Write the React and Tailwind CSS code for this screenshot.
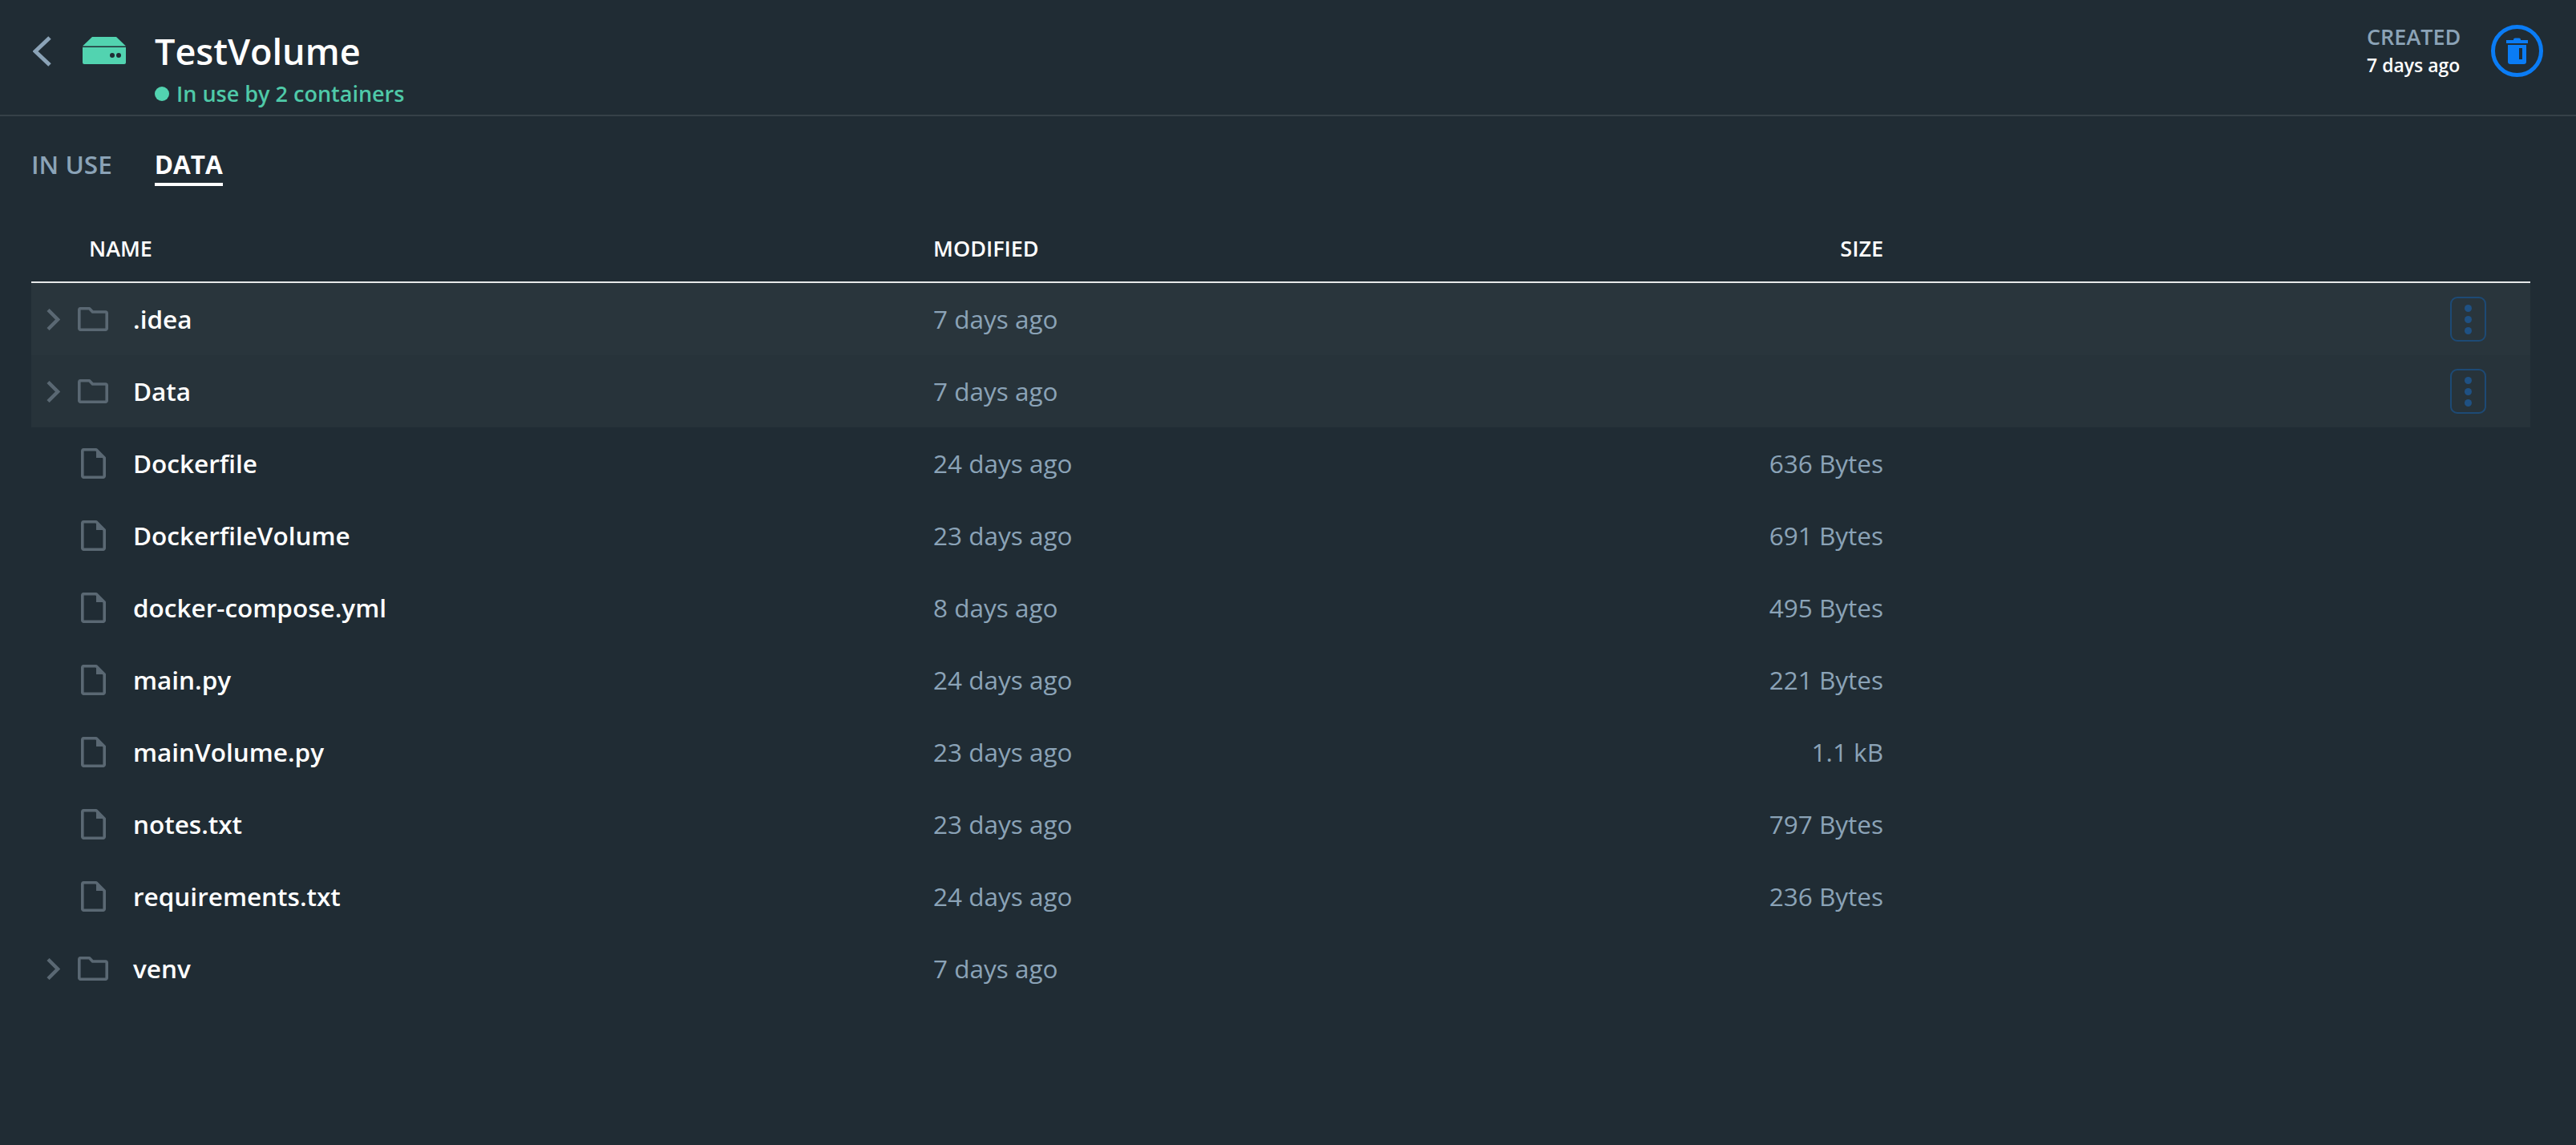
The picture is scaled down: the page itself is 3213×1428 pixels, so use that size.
import React from 'react';

const rows = [
  { name: '.idea', modified: '7 days ago', folder: true, menu: true, bg: 'bg-[#29353c]' },
  { name: 'Data', modified: '7 days ago', folder: true, menu: true, bg: 'bg-[#27333a]' },
  { name: 'Dockerfile', modified: '24 days ago', size: '636 Bytes' },
  { name: 'DockerfileVolume', modified: '23 days ago', size: '691 Bytes' },
  { name: 'docker-compose.yml', modified: '8 days ago', size: '495 Bytes' },
  { name: 'main.py', modified: '24 days ago', size: '221 Bytes' },
  { name: 'mainVolume.py', modified: '23 days ago', size: '1.1 kB' },
  { name: 'notes.txt', modified: '23 days ago', size: '797 Bytes' },
  { name: 'requirements.txt', modified: '24 days ago', size: '236 Bytes' },
  { name: 'venv', modified: '7 days ago', folder: true },
];

const VolumeIcon = () => (
  <svg width="54" height="34" viewBox="0 0 54 34" className="shrink-0">
    <path d="M12 0h30l12 11.500H0z" fill="#52d3b0" />
    <path d="M0 13h54v19a2 2 0 0 1-2 2H2a2 2 0 0 1-2-2z" fill="#52d3b0" />
    <circle cx="37" cy="23" r="3" fill="#202c34" />
    <circle cx="45" cy="23" r="3" fill="#202c34" />
  </svg>
);

const BackIcon = () => (
  <svg width="23" height="38" viewBox="0 0 23 38" fill="none">
    <path d="M21 2L3 19l18 17" stroke="#8ba3b7" strokeWidth="5" />
  </svg>
);

const Chevron = () => (
  <svg width="17" height="27" viewBox="0 0 17 27" fill="none">
    <path d="M2 1.500l12 12-12 12" stroke="#5a6873" strokeWidth="4.500" />
  </svg>
);

const FolderIcon = () => (
  <svg width="38" height="30" viewBox="0 0 38 30" fill="none">
    <path d="M1.800 3A1.500 1.500 0 0 1 3 1.800h11.500l4 4.200H35A1.500 1.500 0 0 1 36.200 7.500V27a1.500 1.500 0 0 1-1.200 1.200H3A1.500 1.500 0 0 1 1.800 27z" stroke="#5a6873" strokeWidth="3.600" strokeLinejoin="round" />
  </svg>
);

const FileIcon = () => (
  <svg width="31" height="38" viewBox="0 0 31 38" fill="none">
    <path d="M1.800 3A1.500 1.500 0 0 1 3 1.800h16L29.200 12v23a1.500 1.500 0 0 1-1.200 1.200H3A1.500 1.500 0 0 1 1.800 35z" stroke="#5a6873" strokeWidth="3.600" strokeLinejoin="round" />
    <path d="M19 1.500V12h10.500z" fill="#5a6873" />
  </svg>
);

const TrashIcon = () => (
  <svg width="27" height="33" viewBox="0 0 27 33">
    <path d="M9 2.500a2 2 0 0 1 2-2h5a2 2 0 0 1 2 2V3h9v4H0V3h9z" fill="#0a7cf5" />
    <path d="M2 9h23v21a3 3 0 0 1-3 3H5a3 3 0 0 1-3-3z" fill="#0a7cf5" />
    <rect x="16" y="13" width="4" height="14" fill="#202c34" />
  </svg>
);

const Kebab = () => (
  <div className="w-[45px] h-[56px] rounded-[9px] border-[2px] border-[#1d4a75] flex flex-col items-center justify-center gap-[5px]">
    <span className="w-[9px] h-[9px] rounded-full bg-[#1f5183]" />
    <span className="w-[9px] h-[9px] rounded-full bg-[#1f5183]" />
    <span className="w-[9px] h-[9px] rounded-full bg-[#1f5183]" />
  </div>
);

function Row({ row }) {
  return (
    <div className={`h-[90px] flex items-center ${row.bg || ''}`}>
      <div className="w-[58px] shrink-0 pl-[19px] flex items-center">
        {row.folder && <Chevron />}
      </div>
      <div className="w-[69px] shrink-0">
        <div className="w-[38px] flex justify-center">{row.folder ? <FolderIcon /> : <FileIcon />}</div>
      </div>
      <div className="w-[998px] shrink-0 text-[31.5px] font-semibold text-white">{row.name}</div>
      <div className="w-[600px] shrink-0 text-[31.5px] text-[#8ba3b7]">{row.modified}</div>
      <div className="w-[585px] shrink-0 text-right text-[31.5px] text-[#8ba3b7]">{row.size}</div>
      <div className="flex-1 flex justify-end pr-[55px]">{row.menu && <Kebab />}</div>
    </div>
  );
}

export default function App() {
  return (
    <div className="min-h-[1428px] bg-[#202c34] font-['Open_Sans',sans-serif] overflow-hidden">
      <header className="h-[145px] border-b-[2px] border-[#364148] flex pl-[41px] pr-[41px]">
        <div className="pt-[45px] w-[62px] shrink-0"><BackIcon /></div>
        <div className="pt-[46px] w-[90px] shrink-0"><VolumeIcon /></div>
        <div className="flex-1 pt-[34px]">
          <div className="text-[45px] leading-[60px] font-semibold text-white">TestVolume</div>
          <div className="flex items-center gap-[9px] text-[27px] leading-[36px] font-semibold text-[#4fc9a8] mt-[5px]">
            <span className="w-[18px] h-[18px] rounded-full bg-[#52d3b0]" />
            In use by 2 containers
          </div>
        </div>
        <div className="pt-[28px] w-[155px] shrink-0">
          <div className="text-[27px] leading-[36px] font-semibold text-[#8ba3b7]">CREATED</div>
          <div className="text-[23px] leading-[34px] font-semibold text-white">7 days ago</div>
        </div>
        <div className="pt-[31px] shrink-0">
          <div className="w-[65px] h-[65px] rounded-full border-[5px] border-[#0a7cf5] flex items-center justify-center">
            <TrashIcon />
          </div>
        </div>
      </header>

      <nav className="flex gap-[53px] pl-[39px] pt-[39px] text-[31.5px] leading-[42px] font-semibold">
        <div className="text-[#8ba3b7]">IN USE</div>
        <div className="text-white font-bold border-b-[4px] border-white h-[48px]">DATA</div>
      </nav>

      <div className="mx-[39px] w-[3117px] mt-[37px]">
        <div className="h-[84px] flex items-center border-b-[2px] border-[#e6e8e9] text-[27px] font-semibold text-white">
          <div className="w-[72px] shrink-0" />
          <div className="w-[1053px] shrink-0">NAME</div>
          <div className="w-[600px] shrink-0">MODIFIED</div>
          <div className="w-[585px] shrink-0 text-right">SIZE</div>
        </div>
        {rows.map(row => <Row key={row.name} row={row} />)}
      </div>
    </div>
  );
}
